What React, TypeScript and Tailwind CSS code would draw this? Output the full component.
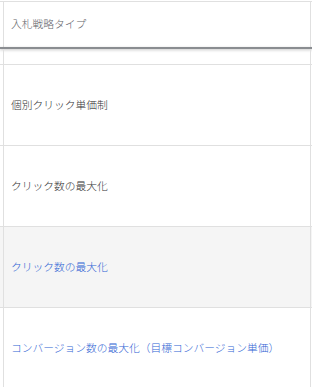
const rows = [
  { label: "個別クリック単価制", link: false, active: false },
  { label: "クリック数の最大化", link: false, active: false },
  { label: "クリック数の最大化", link: true, active: true },
  { label: "コンバージョン数の最大化（目標コンバージョン単価）", link: true, active: false },
];

const font = { fontFamily: '"Noto Sans CJK JP", "Noto Sans", sans-serif' };

const Cell = ({ children, className = "" }: { children?: React.ReactNode; className?: string }) => (
  <div className={`ml-[3px] mr-px flex items-center border-x border-[#e0e0e0] pl-[7px] ${className}`}>
    {children}
  </div>
);

export default function App() {
  return (
    <div className="h-[387px] w-[312px] overflow-hidden bg-white text-[10.75px] font-light" style={font}>
      <div className="h-px" />
      <div className="border-t border-[#e0e0e0]">
        <Cell className="h-[45px] text-[#5f6368]">入札戦略タイプ</Cell>
      </div>
      <div className="h-[2px] bg-[#8a8d91] shadow-[0_1px_3px_rgba(0,0,0,0.25)]" />
      <div className="border-b border-[#e0e0e0]">
        <Cell className="h-[15px]" />
      </div>
      {rows.map((r, i) => (
        <div key={i} className={`border-b border-[#e0e0e0] ${r.active ? "bg-[#f5f5f5]" : ""}`}>
          <Cell className={`h-[80px] ${r.link ? "text-[#2f63d4]" : "text-[#333]"}`}>
            <span className="cursor-pointer whitespace-nowrap">{r.label}</span>
          </Cell>
        </div>
      ))}
    </div>
  );
}
